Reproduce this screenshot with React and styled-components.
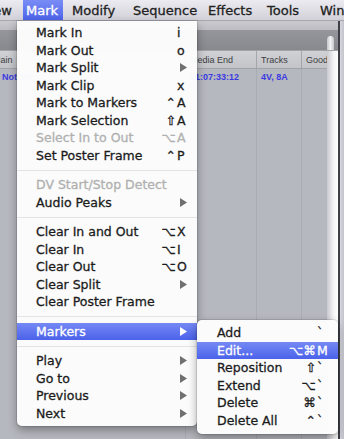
import React from "react";
import styled, { createGlobalStyle } from "styled-components";

const TITLES = [
  { label: "View", w: 51 },
  { label: "Mark", w: 40, active: true },
  { label: "Modify", w: 61 },
  { label: "Sequence", w: 75 },
  { label: "Effects", w: 59 },
  { label: "Tools", w: 53 },
  { label: "Window", w: 70 },
];

const MARK_ITEMS = [
  { label: "Mark In", key: "i" },
  { label: "Mark Out", key: "o" },
  { label: "Mark Split", arrow: true },
  { label: "Mark Clip", key: "x" },
  { label: "Mark to Markers", mods: "⌃", key: "A" },
  { label: "Mark Selection", mods: "⇧", key: "A" },
  { label: "Select In to Out", mods: "⌥", key: "A", disabled: true },
  { label: "Set Poster Frame", mods: "⌃", key: "P" },
  "sep",
  { label: "DV Start/Stop Detect", disabled: true },
  { label: "Audio Peaks", arrow: true },
  "sep",
  { label: "Clear In and Out", mods: "⌥", key: "X" },
  { label: "Clear In", mods: "⌥", key: "I" },
  { label: "Clear Out", mods: "⌥", key: "O" },
  { label: "Clear Split", arrow: true },
  { label: "Clear Poster Frame" },
  "sep",
  { label: "Markers", arrow: true, active: true },
  "sep",
  { label: "Play", arrow: true },
  { label: "Go to", arrow: true },
  { label: "Previous", arrow: true },
  { label: "Next", arrow: true },
];

const MARKER_ITEMS = [
  { label: "Add", key: "`" },
  { label: "Edit...", mods: "⌥⌘", key: "M", active: true },
  { label: "Reposition", mods: "⇧", key: "`" },
  { label: "Extend", mods: "⌥", key: "`" },
  { label: "Delete", mods: "⌘", key: "`" },
  { label: "Delete All", mods: "⌃", key: "`" },
];

function MenuRows({ items, sub }) {
  return items.map((it, i) =>
    it === "sep" ? (
      <Separator key={i} />
    ) : (
      <Item key={i} $sub={sub} $active={it.active} $disabled={it.disabled}>
        <span>{it.label}</span>
        <Mods>{it.mods}</Mods>
        <KeyCell>
          {it.arrow ? (
            <Arrow width="7" height="9" viewBox="0 0 7 9" $active={it.active}>
              <polygon points="0,0 7,4.5 0,9" />
            </Arrow>
          ) : (
            it.key
          )}
        </KeyCell>
      </Item>
    )
  );
}

export default function App() {
  return (
    <Screen>
      <GlobalStyle />
      <MenuBar>
        <MenuStrip>
          {TITLES.map((t) => (
            <MenuTitle key={t.label} $w={t.w} $active={t.active}>
              {t.label}
            </MenuTitle>
          ))}
        </MenuStrip>
      </MenuBar>

      <Workspace>
        <Pane>
          <TopBand />
          <DarkBar>
            <Knob />
          </DarkBar>
          <PaneBody>
            <Table>
              <HeaderRow>
                <HeadCell>
                  <Shifted>Main</Shifted>
                </HeadCell>
                <HeadCell>Media End</HeadCell>
                <HeadCell>Tracks</HeadCell>
                <HeadCell>Good</HeadCell>
              </HeaderRow>
              <DataRow>
                <DataCell>Not Set</DataCell>
                <DataCell>01:07:33:12</DataCell>
                <DataCell>4V, 8A</DataCell>
                <DataCell />
              </DataRow>
              <FillRow>
                <FillCell />
                <FillCell />
                <FillCell />
                <FillCell />
              </FillRow>
            </Table>
            <ScrollTrack />
          </PaneBody>
        </Pane>
        <Rail />
        <EdgeStrip />
      </Workspace>

      <Menu>
        <MenuRows items={MARK_ITEMS} />
      </Menu>
      <Submenu>
        <MenuRows items={MARKER_ITEMS} sub />
      </Submenu>
    </Screen>
  );
}

//styled components
const GlobalStyle = createGlobalStyle`
  html, body {
    margin: 0;
    padding: 0;
  }
  body {
    width: 344px;
    height: 439px;
    overflow: hidden;
    background: #b6b8be;
  }
`;

const Screen = styled.div`
  position: relative;
  width: 344px;
  height: 439px;
  overflow: hidden;
  display: flex;
  flex-direction: column;
  font-family: "DejaVu Sans", "Noto Sans", sans-serif;
`;

const MenuBar = styled.div`
  height: 21px;
  flex-shrink: 0;
  overflow: hidden;
  background: linear-gradient(#ecebf1, #d2d1d9);
  border-bottom: 1px solid #a9a8b0;
  box-sizing: border-box;
`;

const MenuStrip = styled.div`
  display: flex;
  height: 100%;
  margin-left: -28px;
`;

const MenuTitle = styled.div`
  flex-shrink: 0;
  width: ${(p) => p.$w}px;
  box-sizing: border-box;
  padding-left: ${(p) => (p.$active ? 3 : 9)}px;
  display: flex;
  align-items: center;
  font-size: 13px;
  -webkit-text-stroke: 0.3px currentColor;
  color: ${(p) => (p.$active ? "#fff" : "#222")};
  background: ${(p) =>
    p.$active ? "linear-gradient(#7a8df5, #4d63ea)" : "transparent"};
  white-space: nowrap;
`;

const Workspace = styled.div`
  flex: 1;
  display: flex;
  min-height: 0;
`;

const Pane = styled.div`
  width: 338px;
  display: flex;
  flex-direction: column;
`;

const TopBand = styled.div`
  height: 9px;
  background: linear-gradient(#c9c9ce, #bdbdc3);
`;

const DarkBar = styled.div`
  height: 20px;
  display: flex;
  justify-content: flex-end;
  align-items: flex-end;
  background: linear-gradient(#95969c, #88898f);
  border-bottom: 1px solid #a3a4aa;
`;

const Knob = styled.div`
  width: 7px;
  height: 14px;
  margin-right: 4px;
  border-radius: 4px 4px 0 0;
  background: linear-gradient(90deg, #c4c5ca, #f2f2f4, #c4c5ca);
`;

const PaneBody = styled.div`
  flex: 1;
  display: flex;
`;

const Table = styled.div`
  flex: 1;
  display: flex;
  flex-direction: column;
  background: #b6b8bf;
  font-family: "Liberation Sans", Arial, sans-serif;
  font-size: 9px;
`;

const HeaderRow = styled.div`
  display: grid;
  grid-template-columns: 185px 71px 45px 1fr;
  height: 17px;
  background: linear-gradient(#d0d1d5, #c3c4c9);
  border-bottom: 1px solid #a2a3a9;
  overflow: hidden;
`;

const HeadCell = styled.div`
  display: flex;
  align-items: center;
  padding-left: 4px;
  color: #3c3c40;
  border-left: 1px solid #a5a6ac;
  white-space: nowrap;
  overflow: hidden;
  &:first-child {
    border-left: none;
    padding-left: 0;
  }
`;

const Shifted = styled.span`
  margin-left: -7px;
`;

const DataRow = styled.div`
  display: grid;
  grid-template-columns: 185px 71px 45px 1fr;
  height: 16px;
`;

const DataCell = styled.div`
  display: flex;
  align-items: center;
  padding-left: 4px;
  color: #3b3be0;
  font-weight: bold;
  white-space: nowrap;
  overflow: hidden;
  border-left: 1px solid #aaacb3;
  &:first-child {
    border-left: none;
    padding-left: 2px;
  }
`;

const FillRow = styled.div`
  flex: 1;
  display: grid;
  grid-template-columns: 185px 71px 45px 1fr;
`;

const FillCell = styled.div`
  border-left: 1px solid #aaacb3;
  &:first-child {
    border-left: none;
  }
`;

const ScrollTrack = styled.div`
  width: 11px;
  background: linear-gradient(90deg, #c9cad0, #f4f4f6 60%, #ffffff);
`;

const Rail = styled.div`
  width: 2px;
  background: #3e3e47;
`;

const EdgeStrip = styled.div`
  flex: 1;
  background: linear-gradient(90deg, #d6d6de, #c2c3cb);
`;

const Menu = styled.div`
  position: absolute;
  left: 17px;
  top: 21px;
  width: 180px;
  box-sizing: border-box;
  padding: 3px 0 4px;
  background: rgba(252, 252, 252, 0.98);
  border-radius: 0 0 5px 5px;
  box-shadow: 0 0 0 1px rgba(0, 0, 0, 0.1), 0 4px 10px rgba(0, 0, 0, 0.35);
`;

const Submenu = styled.div`
  position: absolute;
  left: 197px;
  top: 320px;
  width: 141px;
  box-sizing: border-box;
  padding: 4px 0 5px;
  background: rgba(252, 252, 252, 0.98);
  border-radius: 5px;
  box-shadow: 0 0 0 1px rgba(0, 0, 0, 0.1), 0 4px 10px rgba(0, 0, 0, 0.35);
`;

const Item = styled.div`
  display: grid;
  grid-template-columns: 1fr auto ${(p) => (p.$sub ? 14 : 13)}px;
  align-items: center;
  height: 17.5px;
  padding: 0 8px 0 ${(p) => (p.$sub ? 20 : 19)}px;
  font-size: 12.5px;
  -webkit-text-stroke: 0.3px currentColor;
  white-space: nowrap;
  color: ${(p) => (p.$active ? "#fff" : p.$disabled ? "#b0b0b0" : "#1b1b1b")};
  background: ${(p) =>
    p.$active ? "linear-gradient(#7589f4, #4b62ea)" : "transparent"};
`;

const Mods = styled.span`
  justify-self: end;
`;

const KeyCell = styled.span`
  display: flex;
  align-items: center;
  padding-left: 1px;
`;

const Arrow = styled.svg`
  margin-left: 3px;
  fill: ${(p) => (p.$active ? "#fff" : "#707070")};
`;

const Separator = styled.div`
  height: 12px;
  display: flex;
  align-items: center;
  &::after {
    content: "";
    flex: 1;
    height: 1px;
    background: #e4e4e6;
  }
`;
